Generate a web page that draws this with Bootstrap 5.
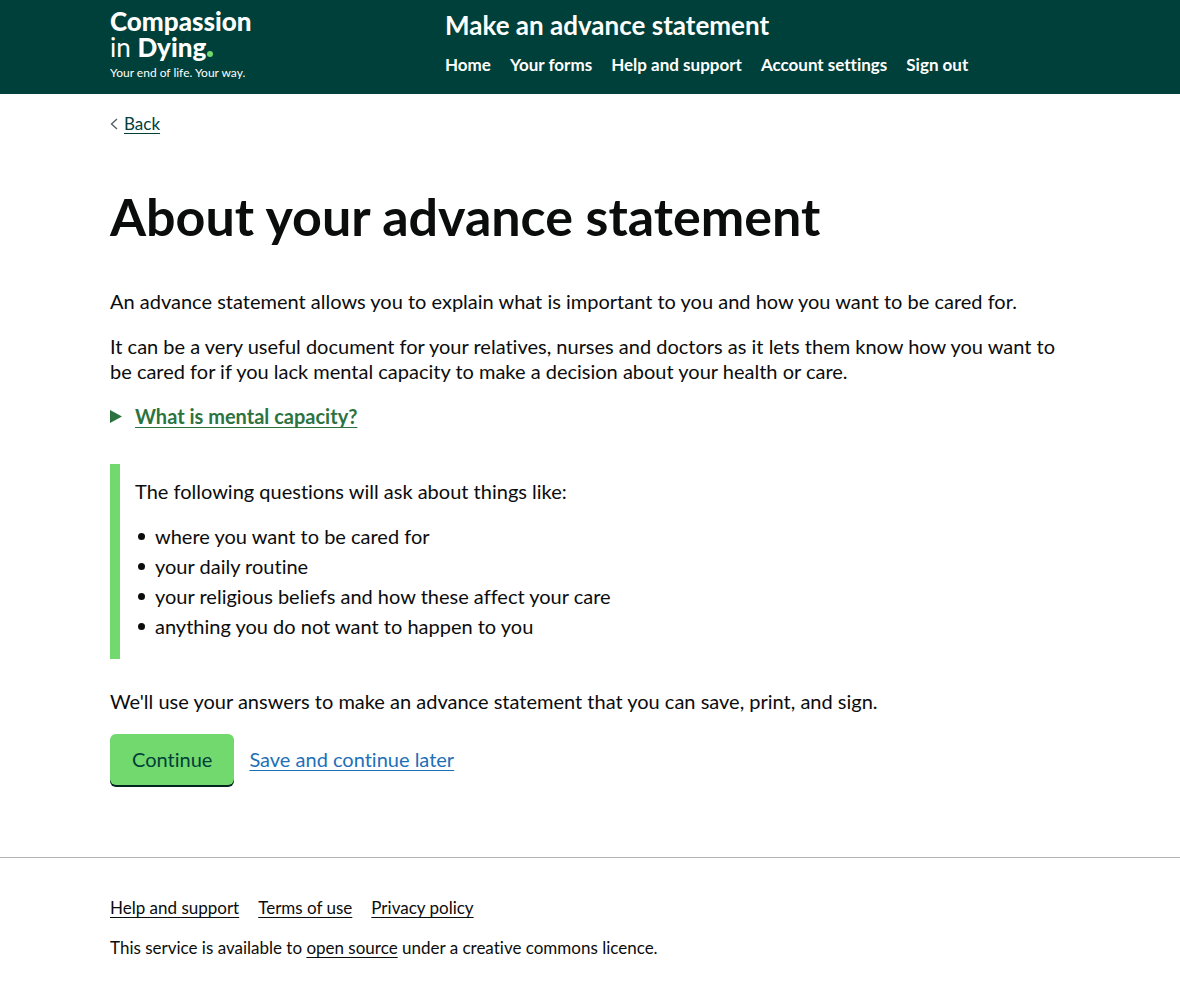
<!DOCTYPE html>
<html lang="en">
<head>
<meta charset="utf-8">
<meta name="viewport" content="width=device-width, initial-scale=1">
<title>About your advance statement</title>
<link href="https://cdn.jsdelivr.net/npm/bootstrap@5.3.0/dist/css/bootstrap.min.css" rel="stylesheet">
<style>
  body, button { font-variant-ligatures: none; }
  body { font-family: Lato, "Open Sans", sans-serif; font-size: 20px; line-height: 25px; color: #0b0c0c; }
  p { margin-bottom: 20px; }
  a { text-underline-offset: 3px; text-decoration-thickness: 1px; }
  .page-width { max-width: 990px; padding-left: 15px; padding-right: 15px; }
  .site-header { background: #00403a; padding: 8px 0 13px; }
  .brand-logo { display: inline-flex; flex-direction: column; color: #fff; text-decoration: none; font-size: 26px; line-height: 26px; white-space: nowrap; }
  .brand-logo b { font-weight: 900; }
  .brand-dot { display: inline-block; width: 6px; height: 6px; margin-left: 1px; border-radius: 50%; background: #71d96d; }
  .brand-tagline { font-size: 12px; line-height: 16px; padding-top: 5px; }
  .service-name { font-size: 26px; line-height: 30px; font-weight: 700; padding-top: 2px; margin-bottom: 15px; }
  .service-name a, .site-nav a { color: #fff; text-decoration: none; }
  .service-col { padding-left: 15px; }
  .site-nav { font-size: 17px; line-height: 20px; font-weight: 700; column-gap: 19px; }
  .back-link { font-size: 17px; line-height: 20px; gap: 6px; color: #00403a; margin-top: 20px; }
  h1.page-title { font-size: 52px; line-height: 56px; font-weight: 700; margin: 53px 0 45px; }
  .disclosure { margin-bottom: 35px; }
  .disclosure summary { display: flex; align-items: center; gap: 13px; width: fit-content; color: #2d7340; font-weight: 700; list-style: none; }
  .disclosure summary span { text-decoration: underline; text-decoration-thickness: 1px; text-underline-offset: 3px; }
  .inset-panel { border-left: 10px solid #71d96d; padding: 15px; margin-bottom: 30px; }
  .inset-panel ul { list-style: none; padding-left: 20px; margin: 0; }
  .inset-panel li { position: relative; margin-bottom: 5px; }
  .inset-panel li::before { content: ""; position: absolute; left: -17px; top: 9px; width: 7px; height: 7px; border-radius: 50%; background: #0b0c0c; }
  .actions { gap: 15px; }
  .btn.btn-continue { --bs-btn-bg: #71d96d; --bs-btn-color: #00403a; --bs-btn-hover-bg: #62c95e; --bs-btn-hover-color: #00403a; --bs-btn-active-bg: #62c95e; font-size: 20px; line-height: 25px; padding: 13px 22px; border: 0; border-radius: 6px; box-shadow: 0 2px 0 #00251f; }
  .save-link { color: #1d70b8; }
  .site-footer { border-top: 1px solid #b1b4b6; margin-top: 72px; padding: 40px 0; font-size: 17px; line-height: 20px; }
  .site-footer a { color: #0b0c0c; }
  .footer-links { column-gap: 19px; margin-bottom: 20px; }
</style>
</head>
<body>
<header class="site-header">
  <div class="container-fluid page-width">
    <div class="row g-0">
      <div class="col-4 d-flex align-items-start">
        <a href="#" class="brand-logo">
          <b>Compassion</b>
          <span>in <b>Dying</b><i class="brand-dot"></i></span>
          <span class="brand-tagline">Your end of life. Your way.</span>
        </a>
      </div>
      <div class="col-8 service-col">
        <div class="service-name"><a href="#">Make an advance statement</a></div>
        <nav class="site-nav d-flex flex-wrap" aria-label="Main">
          <a href="#">Home</a><a href="#">Your forms</a><a href="#">Help and support</a><a href="#">Account settings</a><a href="#">Sign out</a>
        </nav>
      </div>
    </div>
  </div>
</header>

<div class="container-fluid page-width">
  <a href="#" class="back-link d-inline-flex align-items-center text-decoration-none">
    <svg width="8" height="12" viewBox="0 0 8 12" fill="none" stroke="#505a5f" stroke-width="1.3" aria-hidden="true"><path d="M7 1 1.5 6 7 11"/></svg>
    <span class="text-decoration-underline">Back</span>
  </a>
  <main>
    <h1 class="page-title">About your advance statement</h1>
    <p>An advance statement allows you to explain what is important to you and how you want to be cared for.</p>
    <p>It can be a very useful document for your relatives, nurses and doctors as it lets them know how you want to be cared for if you lack mental capacity to make a decision about your health or care.</p>
    <details class="disclosure">
      <summary><svg width="12" height="14" viewBox="0 0 12 14" fill="#2d7340" aria-hidden="true"><path d="M0 0 12 6.5 0 13Z"/></svg><span>What is mental capacity?</span></summary>
    </details>
    <div class="inset-panel">
      <p>The following questions will ask about things like:</p>
      <ul>
        <li>where you want to be cared for</li>
        <li>your daily routine</li>
        <li>your religious beliefs and how these affect your care</li>
        <li>anything you do not want to happen to you</li>
      </ul>
    </div>
    <p>We'll use your answers to make an advance statement that you can save, print, and sign.</p>
    <div class="actions d-flex flex-wrap align-items-center">
      <button type="button" class="btn btn-continue">Continue</button>
      <a href="#" class="save-link">Save and continue later</a>
    </div>
  </main>
</div>

<footer class="site-footer">
  <div class="container-fluid page-width">
    <div class="footer-links d-flex flex-wrap">
      <a href="#">Help and support</a><a href="#">Terms of use</a><a href="#">Privacy policy</a>
    </div>
    <p>This service is available to <a href="#">open source</a> under a creative commons licence.</p>
  </div>
</footer>
<script src="https://cdn.jsdelivr.net/npm/bootstrap@5.3.0/dist/js/bootstrap.bundle.min.js"></script>
</body>
</html>
